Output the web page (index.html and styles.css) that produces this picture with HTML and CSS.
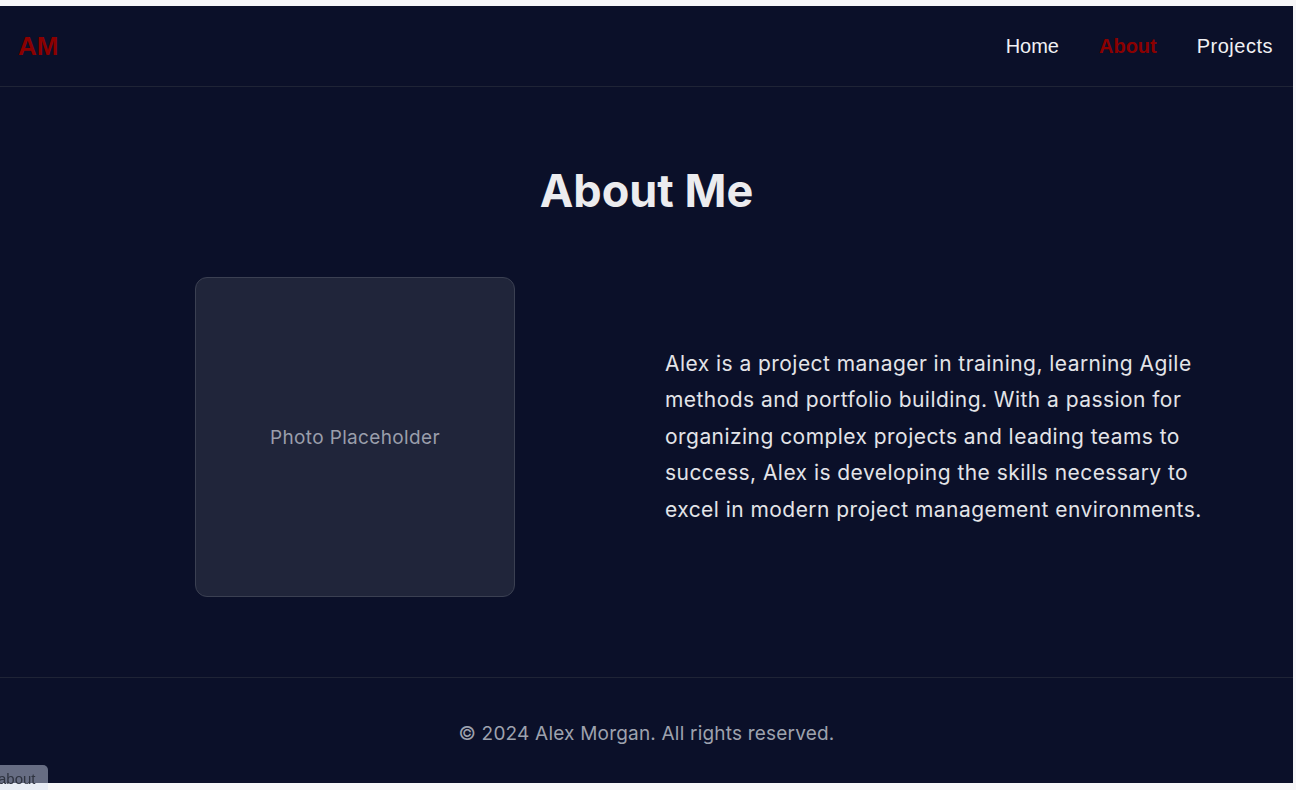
FILE: index.html
```html
<!DOCTYPE html>
<html lang="en">
<head>
<meta charset="utf-8">
<title>About - Alex Morgan</title>
<link rel="stylesheet" href="styles.css">
</head>
<body>
<div class="frame">
  <header class="site-header">
    <a class="logo" href="#">AM</a>
    <nav class="nav">
      <a class="nav-link" href="#">Home</a>
      <a class="nav-link active" href="#">About</a>
      <a class="nav-link wide" href="#">Projects</a>
    </nav>
  </header>
  <main class="about">
    <h1 class="about-title">About Me</h1>
    <div class="about-grid">
      <div class="photo-cell">
        <div class="photo">Photo Placeholder</div>
      </div>
      <p class="bio">Alex is a project manager in training, learning Agile methods and portfolio building. With a passion for organizing complex projects and leading teams to success, Alex is developing the skills necessary to excel in modern project management environments.</p>
    </div>
  </main>
  <footer class="site-footer">
    <p class="copy">© 2024 Alex Morgan. All rights reserved.</p>
  </footer>
</div>
<div class="status-bar">about</div>
</body>
</html>
```

FILE: styles.css
```css
html, body {
  margin: 0;
  padding: 0;
}
body {
  background: #f7f7f8;
  height: 790px;
  overflow: hidden;
  font-family: Inter, "Noto Sans", sans-serif;
}
.frame {
  margin: 6px 3px 0 0;
  height: 777px;
  background: #0b1029;
  display: flex;
  flex-direction: column;
}
.site-header {
  box-sizing: border-box;
  height: 81px;
  border-bottom: 1px solid #1f2436;
  display: flex;
  align-items: center;
  justify-content: space-between;
  padding: 0 20px 0 18px;
}
.logo {
  font-family: "Liberation Sans", Arial, sans-serif;
  font-weight: 700;
  font-size: 26px;
  color: #8b0000;
  text-decoration: none;
}
.nav {
  display: flex;
  gap: 40px;
}
.nav-link {
  font-family: "Liberation Sans", Arial, sans-serif;
  font-size: 20px;
  color: #f1f1f4;
  text-decoration: none;
}
.nav-link.wide {
  letter-spacing: 0.5px;
}
.nav-link.active {
  color: #8b0000;
  font-weight: 700;
}
.about {
  flex: 1;
  padding: 76px 0 0;
}
.about-title {
  margin: 0;
  text-align: center;
  font-size: 45px;
  font-weight: 700;
  color: #ececef;
  line-height: 56px;
}
.about-grid {
  max-width: 1129px;
  margin: 58px auto 0;
  display: grid;
  grid-template-columns: 1fr 1fr;
  column-gap: 37px;
  align-items: center;
}
.photo-cell {
  display: flex;
  justify-content: center;
}
.photo {
  width: 318px;
  height: 318px;
  background: #20253a;
  border: 1px solid #3b4052;
  border-radius: 12px;
  display: flex;
  align-items: center;
  justify-content: center;
  color: #9a9eab;
  font-size: 19px;
  letter-spacing: 0.35px;
}
.bio {
  margin: 0;
  font-size: 21px;
  letter-spacing: 0.45px;
  line-height: 36.5px;
  color: #e3e4e8;
}
.site-footer {
  height: 105px;
  border-top: 1px solid #1f2436;
  display: flex;
  align-items: center;
  justify-content: center;
}
.copy {
  margin: 6px 0 0;
  font-size: 19px;
  letter-spacing: 0.2px;
  color: #9ea2ae;
}
.status-bar {
  position: fixed;
  left: 0;
  bottom: 0;
  width: 48px;
  height: 25px;
  background: rgba(214, 224, 242, 0.45);
  border-top-right-radius: 5px;
  font-family: "Liberation Sans", Arial, sans-serif;
  font-size: 15px;
  line-height: 27px;
  color: #2f3340;
  text-indent: -2px;
  white-space: nowrap;
  overflow: hidden;
}
```
